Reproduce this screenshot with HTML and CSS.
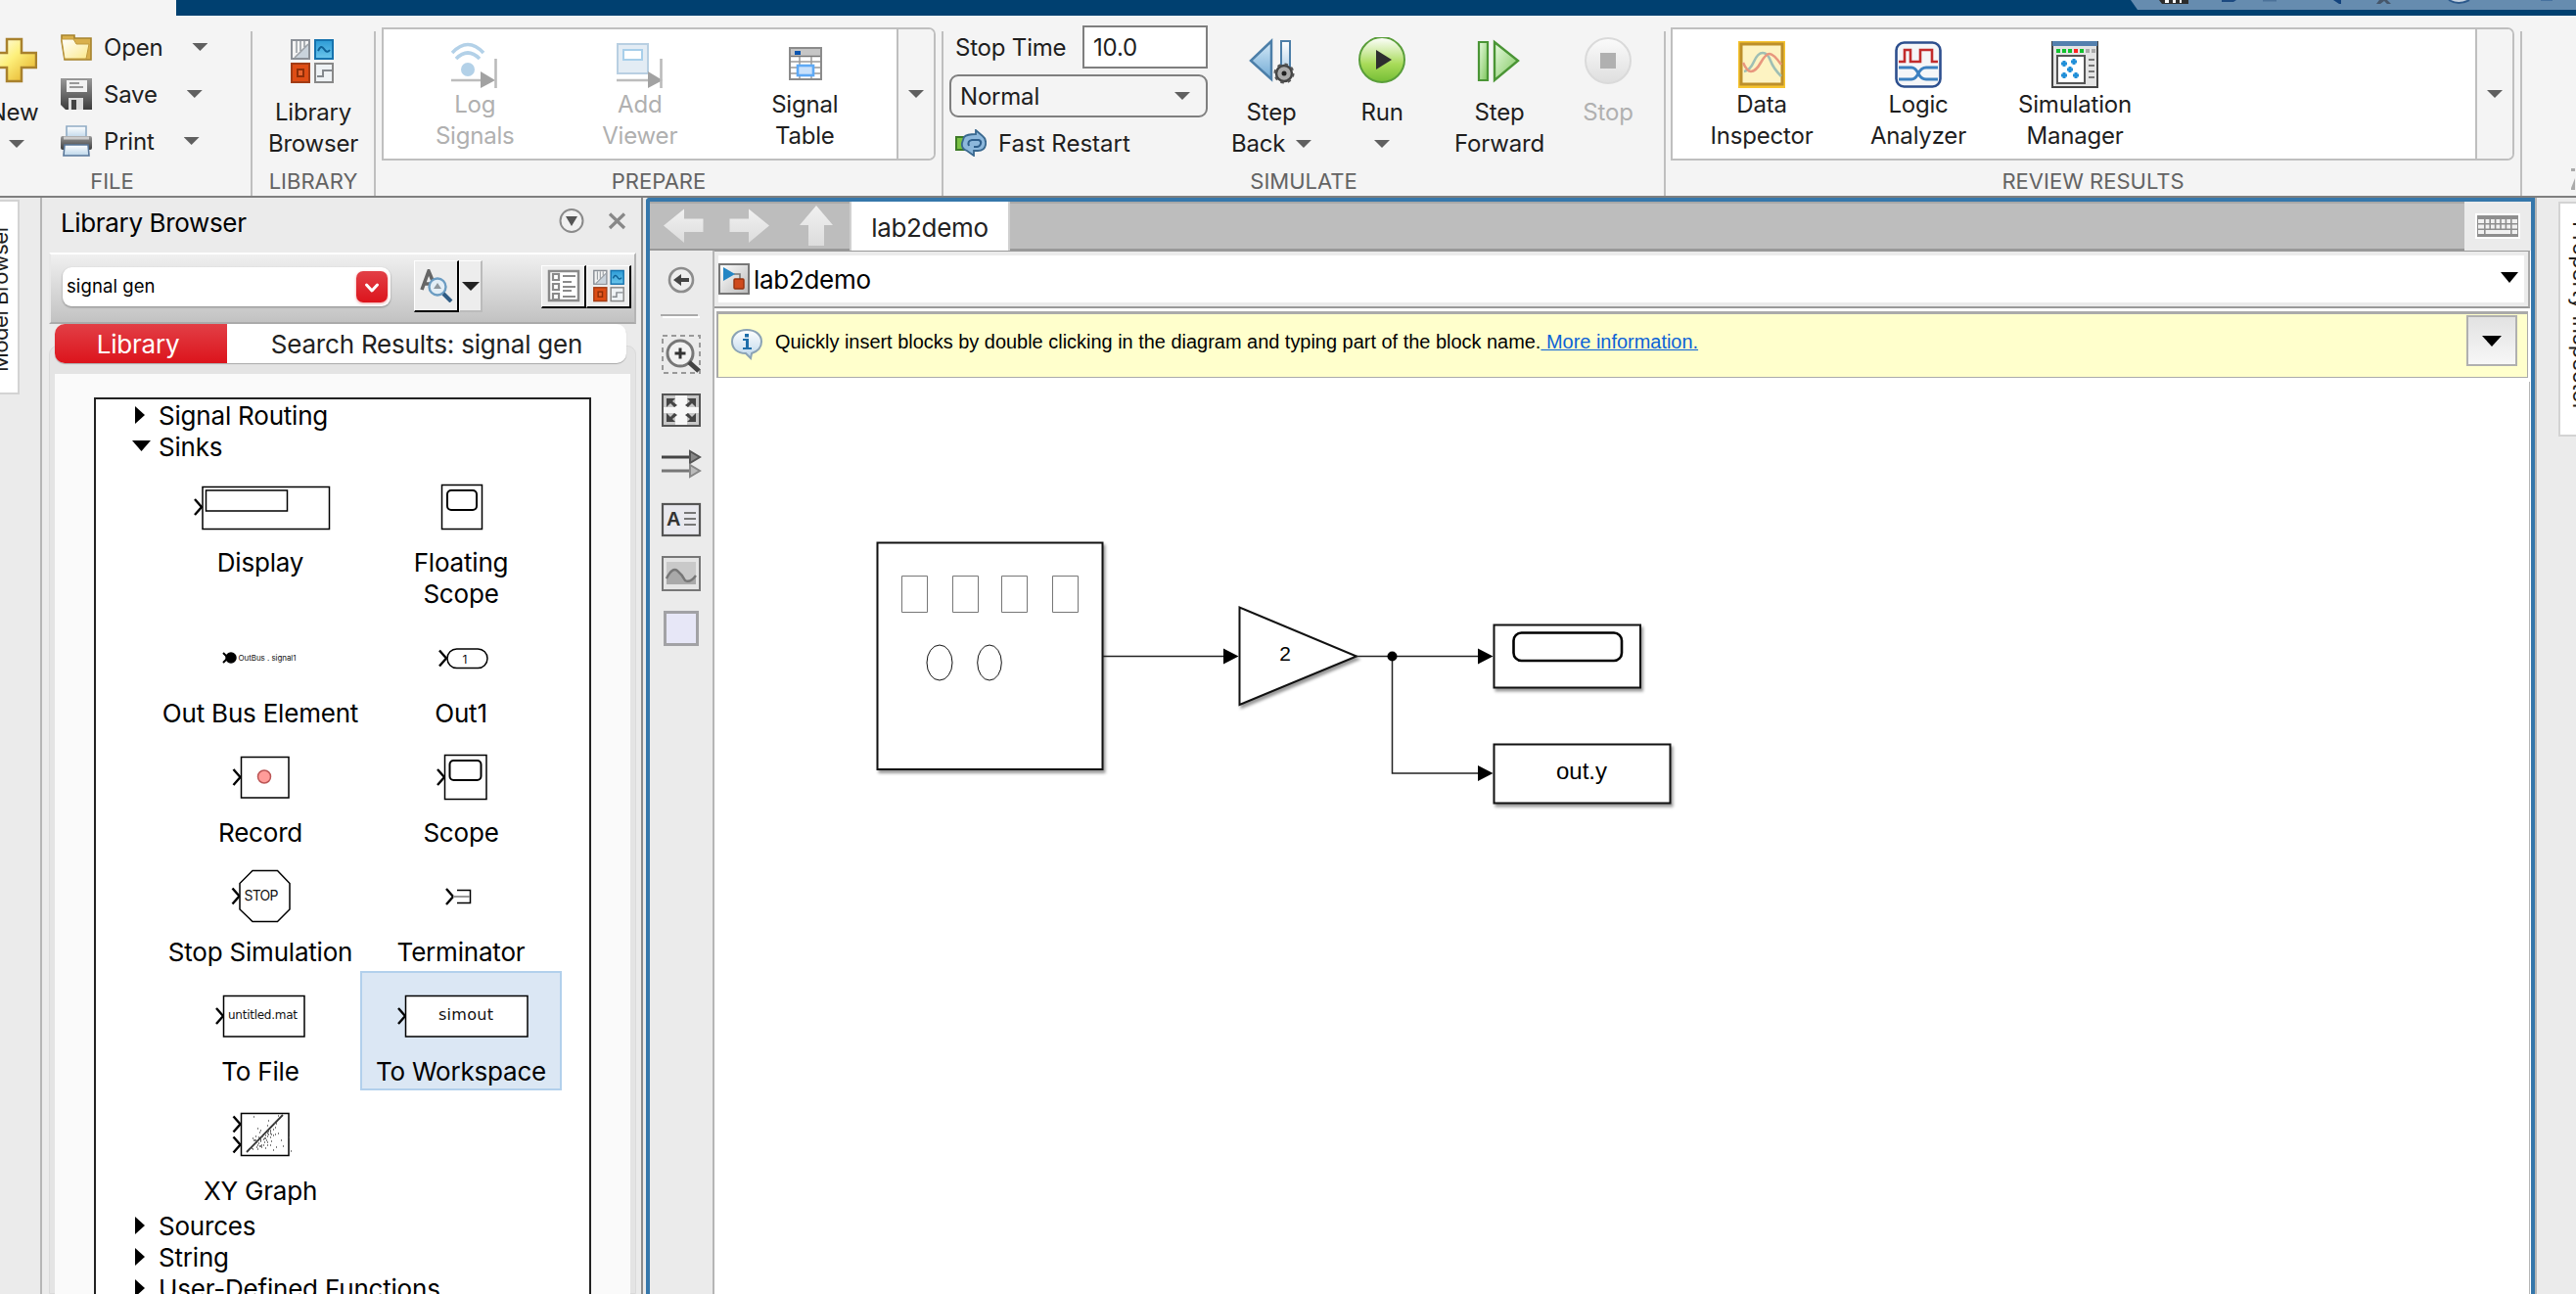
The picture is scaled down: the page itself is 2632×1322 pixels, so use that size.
FILE: index.html
```html
<!DOCTYPE html>
<html lang="en">
<head>
<meta charset="utf-8">
<title>lab2demo - Simulink</title>
<link rel="stylesheet" href="styles.css">
</head>
<body>
<svg class="defs" width="0" height="0">
  <defs>
    <linearGradient id="gold" x1="0" y1="0" x2="1" y2="1"><stop offset="0" stop-color="#fff"/><stop offset=".45" stop-color="#fdf07c"/><stop offset="1" stop-color="#e2a81c"/></linearGradient>
    <linearGradient id="folder" x1="0" y1="0" x2="1" y2="1"><stop offset="0" stop-color="#fff"/><stop offset="1" stop-color="#fbe98a"/></linearGradient>
    <linearGradient id="steel" x1="0" y1="0" x2="0" y2="1"><stop offset="0" stop-color="#999"/><stop offset="1" stop-color="#3c3c3c"/></linearGradient>
    <linearGradient id="pale" x1="0" y1="0" x2="0" y2="1"><stop offset="0" stop-color="#fff"/><stop offset="1" stop-color="#bcd6ea"/></linearGradient>
    <linearGradient id="silver" x1="0" y1="0" x2="1" y2="1"><stop offset="0" stop-color="#fff"/><stop offset="1" stop-color="#bbb"/></linearGradient>
    <linearGradient id="green" x1="0" y1="0" x2="0" y2="1"><stop offset="0" stop-color="#fff"/><stop offset=".35" stop-color="#cdeaa0"/><stop offset=".6" stop-color="#a8db58"/><stop offset="1" stop-color="#74bd35"/></linearGradient>
    <linearGradient id="mint" x1="0" y1="0" x2="1" y2="1"><stop offset="0" stop-color="#e8fbe0"/><stop offset="1" stop-color="#7dc65c"/></linearGradient>
    <linearGradient id="blue" x1="0" y1="0" x2="0" y2="1"><stop offset="0" stop-color="#d6eaf8"/><stop offset="1" stop-color="#6fa9d4"/></linearGradient>
    <linearGradient id="sky" x1="0" y1="0" x2="0" y2="1"><stop offset="0" stop-color="#2c9bd6"/><stop offset="1" stop-color="#6cc6ec"/></linearGradient>
    <linearGradient id="fade" x1="0" y1="0" x2="0" y2="1"><stop offset="0" stop-color="#fbfbfb"/><stop offset="1" stop-color="#dedede"/></linearGradient>
    <linearGradient id="arrow" x1="0" y1="0" x2="0" y2="1"><stop offset="0" stop-color="#f1f1f1"/><stop offset="1" stop-color="#dcdcdc"/></linearGradient>
    <g id="port"><path d="M-7-8 0 0-7 8" fill="none" stroke="#000" stroke-width="2.4"/></g>
    <g id="blocks">
      <rect x="1" y="1" width="18" height="19" fill="#f4f4f4" stroke="#8a8f96" stroke-width="2"/><path d="M5 19 18 5v14z" fill="#c9d3dc"/><path d="M6 2v12M10 2v10M14 2v6M4 19 18 5" fill="none" stroke="#9aa0a6" stroke-width="1.600"/>
      <rect x="25" y="1" width="18" height="19" fill="url(#sky)" stroke="#1673ae" stroke-width="2"/><path d="M28 12q3-7 6-2t6 1" fill="none" stroke="#0f6297" stroke-width="2"/>
      <rect x="1" y="25" width="18" height="19" fill="#de4d15" stroke="#a23c15" stroke-width="2"/><rect x="7" y="31" width="6" height="7" fill="#e8622c" stroke="#8e2e08" stroke-width="2"/>
      <rect x="25" y="25" width="18" height="19" fill="#eef2f5" stroke="#888" stroke-width="2"/><path d="M27 38h6v-6h9" fill="none" stroke="#84898e" stroke-width="2"/>
    </g>
  </defs>
</svg>

<header class="titlebar">
  <div class="active-tab"></div>
  <svg class="quick-access" width="458" height="16" viewBox="2174 0 458 16">
    <path d="M2177 0h455v10h-448z" fill="#668caf"/>
    <path d="M2206 0h30v4h-27z" fill="#2d2d2d"/><path d="M2212 0h4v3h-4zM2220 0h3v3h-3zM2227 0h2v3h-2z" fill="#fff"/>
    <path d="M2270 0h15l-3 2h-12z" fill="#1c4980"/><path d="M2312 0h14v1.500h-14z" fill="#4c7299"/>
    <path d="M2384 0h8v4h-2z" fill="#13437d"/><path d="M2428 4l3-4h8l4 4h-4l-3-3-4 3z" fill="#46566a"/>
    <path d="M2502 0q10 6 21 0" fill="#c8d4e2" stroke="#2d5a8c" stroke-width="2"/><path d="M2596 0h12v.8h-12z" fill="#3f6c9b"/>
  </svg>
</header>

<div class="toolstrip">
  <section class="section file">
    <div class="body">
      <button class="tall new"><svg class="ico" width="48" height="48" viewBox="0 0 48 48"><path d="M17 2h15v14h15v15H32v14H17V31H2V16h15z" fill="url(#gold)" stroke="#a8812d" stroke-width="2.500"/></svg><span>New</span><i class="caret"></i></button>
      <div class="file-list">
        <button class="row"><svg width="32" height="32" viewBox="0 0 32 32"><path d="M1 4h13v3h17v22H4L1 10z" fill="#d9b04c" stroke="#a5822d" stroke-width="1.600"/><path d="M1 8h12l3 5h13l-3 15H4z" fill="url(#folder)" stroke="#c09a3d" stroke-width="1"/></svg><span>Open</span><i class="caret"></i></button>
        <button class="row"><svg width="32" height="32" viewBox="0 0 32 32"><path d="M0 0h32v32H5l-5-5z" fill="url(#steel)"/><path d="M6 2h21v12H6z" fill="#f2f2f2"/><path d="M9 5h10M9 9h14" stroke="#999" stroke-width="2"/><path d="M8 20h15v12H8z" fill="#ddd"/><path d="M11 22h5v10h-5z" fill="#444"/></svg><span>Save</span><i class="caret"></i></button>
        <button class="row"><svg width="32" height="32" viewBox="0 0 32 32"><path d="M6 1h20v12H6z" fill="url(#pale)" stroke="#8fabc4" stroke-width="1.600"/><rect y="11" width="32" height="14" rx="2" fill="url(#steel)"/><path d="M3 13h26" stroke="#ccc" stroke-width="3"/><path d="M4 20h24l1 11H3z" fill="url(#pale)" stroke="#58779a" stroke-width="1.600"/></svg><span>Print</span><i class="caret"></i></button>
      </div>
    </div>
    <h2>FILE</h2>
  </section>
  <div class="divider"></div>
  <section class="section library">
    <div class="body"><button class="tall"><svg class="ico" width="48" height="48" viewBox="-1 -2 48 48"><use href="#blocks"/></svg><span>Library<br>Browser</span></button></div>
    <h2>LIBRARY</h2>
  </section>
  <div class="divider"></div>
  <section class="section prepare">
    <div class="gallery">
      <button class="item off"><svg width="48" height="48" viewBox="0 0 48 48"><path d="M1 12Q17-5 33 12M5 18q12-12 24 0" fill="none" stroke="#b3d1e8" stroke-width="3.600"/><circle cx="17" cy="29" r="7" fill="#b3d1e8"/><path d="M0 40h32" stroke="#bdbdbd" stroke-width="2.600"/><path d="M30 31v17l15-8z" fill="#a2a2a2"/><path d="M45.500 18v30" stroke="#bbb" stroke-width="2.600"/></svg><span>Log<br>Signals</span></button>
      <button class="item off"><svg width="48" height="48" viewBox="0 0 48 48"><rect x="1" y="3" width="31" height="30" fill="#e3ecf4" stroke="#b8cfe2" stroke-width="2"/><rect x="7" y="9" width="19" height="10" fill="#fff" stroke="#a8cfea" stroke-width="2"/><path d="M0 40h32" stroke="#bdbdbd" stroke-width="2.600"/><path d="M32 31v17l15-8z" fill="#a2a2a2"/><path d="M45.500 18v30" stroke="#bbb" stroke-width="2.600"/></svg><span>Add<br>Viewer</span></button>
      <button class="item"><svg width="48" height="48" viewBox="0 0 48 48"><rect x="9" y="7" width="32" height="32" fill="#fff" stroke="#8b8b8b" stroke-width="2"/><path d="M10 8h30v7H10z" fill="#c6c6c6"/><path d="M10 15.500h30" stroke="#777" stroke-width="1.600"/><path d="M10 21h30M10 27h30M10 33h30M19 16v22M31 16v22" stroke="#999" stroke-width="1.500"/><path d="M14 10h6v4h-6z" fill="#0a55b0"/><rect x="17" y="25" width="16" height="10" fill="#c9e1fb" stroke="#5ea9f5" stroke-width="2.600"/></svg><span>Signal<br>Table</span></button>
      <button class="more"><i class="caret"></i></button>
    </div>
    <h2>PREPARE</h2>
  </section>
  <div class="divider"></div>
  <section class="section simulate">
    <div class="body">
      <div class="sim-form">
        <label class="stop-time"><span>Stop Time</span><span class="field">10.0</span></label>
        <div class="select"><span>Normal</span><i class="caret"></i></div>
        <div class="restart"><svg width="32" height="28" viewBox="0 0 32 28"><path d="M1 8h11v13H1z" fill="#7ac143" stroke="#3d7a27" stroke-width="2"/><path d="M9 8q3-3 12-3V1l7 6q4 3 3 9t-8 6h-4v5l-7-5q-6-2-5-8z" fill="#8db8dc" stroke="#39688f" stroke-width="1.800"/><path d="M14 17q-2-5 3-6h7q3 1 2 4t-4 3h-3" fill="none" stroke="#2f5f8c" stroke-width="2"/></svg><span>Fast Restart</span></div>
      </div>
      <button class="tall back"><svg class="ico" width="48" height="48" viewBox="0 0 48 48"><path d="M24 4v39L3 24z" fill="url(#blue)" stroke="#4c7ea8" stroke-width="2.500"/><path d="M34 4h9v27h-9z" fill="url(#pale)" stroke="#4c7ea8" stroke-width="2"/><circle cx="37" cy="37" r="8" fill="#aaa" stroke="#444" stroke-width="2.500"/><circle cx="37" cy="37" r="9.500" fill="none" stroke="#555" stroke-width="2" stroke-dasharray="3.500 4"/><circle cx="37" cy="37" r="2.500" fill="#222"/></svg><span>Step<br>Back <i class="caret"></i></span></button>
      <button class="tall run"><svg class="ico" width="48" height="48" viewBox="0 0 48 48"><circle cx="24" cy="23" r="23" fill="url(#green)" stroke="#5a9e3a" stroke-width="2"/><path d="M18 13v20l16-10z" fill="#2e2e2e"/></svg><span>Run</span><i class="caret"></i></button>
      <button class="tall forward"><svg class="ico" width="48" height="48" viewBox="0 0 48 48"><path d="M3 5h9v39H3z" fill="url(#mint)" stroke="#4a9535" stroke-width="2.200"/><path d="M19 5v39l24-20z" fill="url(#mint)" stroke="#4a9535" stroke-width="2.400"/></svg><span>Step<br>Forward</span></button>
      <button class="tall stop off"><svg class="ico" width="48" height="48" viewBox="0 0 48 48"><circle cx="24" cy="24" r="23" fill="url(#fade)" stroke="#dadada" stroke-width="2"/><path d="M16 16h16v16H16z" fill="#b0b0b0"/></svg><span>Stop</span></button>
    </div>
    <h2>SIMULATE</h2>
  </section>
  <div class="divider"></div>
  <section class="section review">
    <div class="gallery">
      <button class="item"><svg width="48" height="48" viewBox="0 0 48 48"><path d="M0 0h48v48H0z" fill="#f6c430"/><rect x="3" y="3" width="42" height="41" fill="#fdf3c2" stroke="#bd8f2b" stroke-width="3"/><path d="M6 31q6-1 10-10t9-9 8 8 11 16" fill="none" stroke="#9fbfb4" stroke-width="2.600"/><path d="M5 22q4 9 8 9 5 0 10-9t9-9 12 11" fill="none" stroke="#e8977e" stroke-width="2.600"/></svg><span>Data<br>Inspector</span></button>
      <button class="item"><svg width="48" height="48" viewBox="0 0 48 48"><rect x="1.500" y="1.500" width="45" height="45" rx="8" fill="#f5f6f8" stroke="#2d4f8e" stroke-width="2.600"/><path d="M4 21h6V9h6v12h10V9h12v12h6" fill="none" stroke="#c22c2c" stroke-width="2.600"/><path d="M4 27h13q4 0 7 6t8 6h12M4 39h13q4 0 7-6t8-6h12" fill="none" stroke="#3c80c0" stroke-width="2.800"/></svg><span>Logic<br>Analyzer</span></button>
      <button class="item"><svg width="48" height="48" viewBox="0 0 48 48"><rect x="1" y="1" width="46" height="46" fill="#e4e4e4" stroke="#444" stroke-width="2"/><path d="M1 0h46v5H1z" fill="#5480ae"/><path d="M5 10h24" stroke="#12c12e" stroke-width="4" stroke-dasharray="4 2"/><path d="M23 10h4" stroke="#f22" stroke-width="4"/><path d="M29 10h4" stroke="#12c12e" stroke-width="4"/><path d="M35 10h10" stroke="#aaa" stroke-width="4" stroke-dasharray="4 2"/><rect x="6" y="15" width="28" height="28" fill="#fff" stroke="#555" stroke-width="2"/><path d="M13 20v6M10 23h6M23 18v6M20 21h6M19 26v6M16 29h6M13 32v6M10 35h6M25 32v6M22 35h6" stroke="#208fd8" stroke-width="3"/><path d="M41 18v22" stroke="#777" stroke-width="6" stroke-dasharray="2 4"/></svg><span>Simulation<br>Manager</span></button>
      <button class="more"><i class="caret"></i></button>
    </div>
    <h2>REVIEW RESULTS</h2>
  </section>
  <div class="divider"></div>
  <svg class="collapse" width="54" height="184" viewBox="2578 16 54 184"><path d="M2628 172h4v3h-4zM2628 192l4-10v12h-4z" fill="#aaa"/></svg>
</div>

<main class="workspace">
  <aside class="edge left">
    <svg width="18" height="195" viewBox="0 206 18 195"><text class="side-text" transform="translate(8 380) rotate(-90)" textLength="151">Model Browser</text></svg>
  </aside>

  <section class="browser">
    <div class="panel-title"><span>Library Browser</span>
      <svg width="70" height="28" viewBox="570 212 70 28"><circle cx="584" cy="225.500" r="11.500" fill="#f0f0f0" stroke="#8a8a8a" stroke-width="2"/><path d="M578 221h12l-6 10z" fill="#555"/><path d="M623 218.500l15 14.500M638 218.500 623 233" stroke="#888" stroke-width="3.200"/></svg>
    </div>
    <div class="toolbar">
      <div class="search"><span>signal gen</span><b><svg width="32" height="32" viewBox="0 0 32 32"><path d="M10.500 14l5.500 6 5.500-6" fill="none" stroke="#fff" stroke-width="3" stroke-linecap="round" stroke-linejoin="round"/></svg></b></div>
      <div class="bevel find"><svg width="34" height="34" viewBox="0 0 34 34"><path d="M2 21 9 2l5 12M4 15h6" fill="none" stroke="#666" stroke-width="3.600"/><circle cx="18" cy="18" r="8.500" fill="#e3eef6" stroke="#6b9cc2" stroke-width="2.400"/><path d="M14 20l4-6 4 6z" fill="#8f979d"/><path d="M24 25l8 8" stroke="#2f5c85" stroke-width="4"/></svg></div>
      <div class="bevel soft"><svg width="18" height="9" viewBox="0 0 18 9"><path d="M0 0h18L9 9z" fill="#222"/></svg></div>
      <div class="bevel list"><svg width="34" height="34" viewBox="0 0 34 34"><path d="M2 2h30v30H2z" fill="#fff" stroke="#8a8a8a" stroke-width="2.500"/><path d="M6 5h6v6H6zM6 15h6v6H6zM6 25h6v6H6zM16 7h13M16 13h9M16 18h13M16 22h9M16 28h13" fill="none" stroke="#8a8a8a" stroke-width="2.200"/></svg></div>
      <div class="bevel"><svg width="34" height="34" viewBox="-1 -1 46 47"><use href="#blocks"/></svg></div>
    </div>
    <div class="group">
      <div class="tabs"><div class="tab on">Library</div><div class="tab">Search Results: signal gen</div></div>
      <div class="pane">
        <div class="tree">
          <div class="node"><svg width="20" height="20"><path d="M3 1v18l10-9z"/></svg><span>Signal Routing</span></div>
          <div class="node open"><svg width="20" height="20"><path d="M0 4h19l-9.500 11z"/></svg><span>Sinks</span></div>
          <div class="cells">
            <figure class="first"><svg width="204" height="86" viewBox="164 472 204 86"><use href="#port" x="206" y="518"/><path d="M207 497.500h129.500v43H207zM210.500 501h83v21h-83z"/></svg><figcaption>Display</figcaption></figure>
            <figure class="first"><svg width="206" height="86" viewBox="368 472 206 86"><path d="M451.500 495.500h41v45h-41z"/><rect x="457" y="501" width="30" height="20" rx="4" stroke-width="2"/></svg><figcaption>Floating<br>Scope</figcaption></figure>
            <figure><svg width="204" height="86" viewBox="164 626 204 86"><path d="M228 667l5 5-5 5" stroke-width="2"/><circle cx="236" cy="672" r="5" fill="#000"/><text class="tiny" x="243.500" y="675" textLength="59">OutBus . signal1</text></svg><figcaption>Out Bus Element</figcaption></figure>
            <figure><svg width="206" height="86" viewBox="368 626 206 86"><use href="#port" x="456" y="672.500"/><rect x="457" y="663" width="41" height="19.500" rx="9.700"/><text class="one" x="475" y="677.500">1</text></svg><figcaption>Out1</figcaption></figure>
            <figure><svg width="204" height="86" viewBox="164 748 204 86"><use href="#port" x="245.500" y="794"/><path d="M246.500 773.500h48.500v41.500h-48.500z"/><circle cx="270" cy="793.500" r="6.500" fill="#ff9c99" stroke="#b55"/></svg><figcaption>Record</figcaption></figure>
            <figure><svg width="206" height="86" viewBox="368 748 206 86"><use href="#port" x="454" y="794"/><path d="M454.500 771.500h42.500v45h-42.500z"/><rect x="459.500" y="777" width="32" height="20" rx="4" stroke-width="2"/></svg><figcaption>Scope</figcaption></figure>
            <figure><svg width="204" height="86" viewBox="164 870 204 86"><use href="#port" x="244.500" y="915.500"/><path d="M258 889.500h25.500L296 902.500v26.500l-12.500 12.500H258l-13-12.500v-26.500z"/><text class="stopword" x="249.500" y="920" textLength="35">STOP</text></svg><figcaption>Stop Simulation</figcaption></figure>
            <figure><svg width="206" height="86" viewBox="368 870 206 86"><use href="#port" x="463" y="916"/><path d="M467 909.500h13.500v13H467"/><path d="M463 916h17" stroke="#999" stroke-width="2"/></svg><figcaption>Terminator</figcaption></figure>
            <figure><svg width="204" height="86" viewBox="164 992 204 86"><use href="#port" x="228" y="1038"/><path d="M228.500 1017.500h82.500v41.500h-82.500z"/><text class="mat" x="233" y="1040.500" textLength="71">untitled.mat</text></svg><figcaption>To File</figcaption></figure>
            <figure class="selected"><svg width="206" height="86" viewBox="368 992 206 86"><use href="#port" x="414" y="1038"/><path d="M414.500 1017.500h124.500v41.500h-124.500z"/><text class="simout" x="448" y="1042" textLength="56">simout</text></svg><figcaption>To Workspace</figcaption></figure>
            <figure><svg width="204" height="86" viewBox="164 1114 204 86"><use href="#port" x="245.500" y="1148.500"/><use href="#port" x="245.500" y="1169.500"/><path d="M246.500 1137.500h48.500v43h-48.500z"/><path d="M252 1177l37-38" stroke="#333" stroke-width="1.800"/><path d="M258 1163h1m3 4h1m-6 6h1m3-12h1m4 4h1m-5 7h1m3-17h1m4 5h1m-3 4h1m4-8h1m-5 11h1m5-5h1m-4 8h1m2-15h1m4 4h1m-9 2h1m-8 10h1m-3-3h1m16-16h1m2 6h1m-5-10h1m-7-3h1m-9 19h1m6-6h1m-9 13h1m10-1h1m-6 3h1m10-1h1m-4 3h1m9-4h1m5-9h1m-9 3h1m-25-12h1m33 23h1M259 1141h1m24-1h1m-3 8h1m-4 6h1m-4 4h1m-10 12h1m-8-5h1m-3 9h1m8-13h1m2 2h1m5-7h1m-3 3h1m-2-9h1m-9 7h1m-7 8h1M261 1165h1m2-3h1m3-1h1m-6 9h1m2-4h1m4-3h1m-3 7h1m3-14h1m3 3h1m-6 6h1m4 1h1m1-6h1m-17 14h1m3-2h1m5-5h1" stroke="#555" stroke-width="1.600"/></svg><figcaption>XY Graph</figcaption></figure>
          </div>
          <div class="node"><svg width="20" height="20"><path d="M3 1v18l10-9z"/></svg><span>Sources</span></div>
          <div class="node"><svg width="20" height="20"><path d="M3 1v18l10-9z"/></svg><span>String</span></div>
          <div class="node"><svg width="20" height="20"><path d="M3 1v18l10-9z"/></svg><span>User-Defined Functions</span></div>
        </div>
      </div>
    </div>
  </section>

  <section class="editor">
    <div class="doc-tabs">
      <svg width="202" height="50" viewBox="664 206 202 50" fill="url(#arrow)"><path d="M678 230.500l21-17v10h19.500v13.500H699v11z"/><path d="M786 230.500l-21-17v10h-19.500v13.500H765v11z"/><path d="M834 210l17 20h-9v21h-16v-21h-9z"/></svg>
      <div class="doc-tab">lab2demo</div>
      <div class="keys"><svg width="46" height="26" viewBox="0 0 46 26"><path d="M0 0h46v26H0z" fill="#fff"/><path d="M2 2h42v22H2z" fill="#8e8e8e"/><path d="M3 8h40M3 13.500h40M3 19h40" stroke="#f1f1f1" stroke-width="4" stroke-dasharray="6 1.600 3.800 1.600 3.800 1.600 3.800 1.600 3.800 1.600 3.800 1.600 6 0"/><path d="M12 19h23" stroke="#f1f1f1" stroke-width="4"/></svg></div>
    </div>
    <div class="split">
      <nav class="palette">
        <svg width="64" height="500" viewBox="664 256 64 500">
          <circle cx="696" cy="286" r="12" fill="#eee" stroke="#8d8d8d" stroke-width="2.600"/><path d="M688 286l8-6v4h8v4h-8v4z" fill="#444"/>
          <path d="M675 322h38" stroke="#aaa" stroke-width="2"/><path d="M677 324h38" stroke="#fff" stroke-width="2"/>
          <path d="M677 343h38v38h-38z" fill="none" stroke="#999" stroke-width="2" stroke-dasharray="5 4"/><circle cx="695" cy="361" r="13" fill="#f2f2f2" stroke="#777" stroke-width="3"/><path d="M695 355.500v11M689.500 361h11" stroke="#333" stroke-width="3"/><path d="M704 370l10 9" stroke="#444" stroke-width="5"/>
          <rect x="677" y="403" width="38" height="32" fill="#c8c8c8" stroke="#555" stroke-width="2"/><path d="M690 404h12v30h-12zM678 416h36v6h-36z" fill="#f7f7f7"/><path d="M681 407h9l-3 3 5 4-3 2-4-4-4 4zM711 407h-9l3 3-5 4 3 2 4-4 4 4zM681 431h9l-3-3 5-4-3-2-4 4-4-4zM711 431h-9l3-3-5-4 3-2 4 4 4-4z" fill="#444"/>
          <path d="M676 467h30" stroke="#444" stroke-width="3"/><path d="M705 461v12l10-6z" fill="#888" stroke="#555" stroke-width="2"/><path d="M676 481h30" stroke="#777" stroke-width="3"/><path d="M705 475v12l10-6z" fill="#bbb" stroke="#888" stroke-width="2"/>
          <rect x="677" y="515" width="38" height="32" fill="#e8e8ee" stroke="#555" stroke-width="2.200"/><text class="glyph" x="681" y="537">A</text><path d="M699 524h12M699 530h12M699 536h12" stroke="#777" stroke-width="2"/>
          <rect x="677" y="569" width="38" height="34" fill="#e5e5e5" stroke="#777" stroke-width="2"/><path d="M681 574h30v23h-30z" fill="#c9c9c9"/><path d="M681 597v-6q6-12 11-8t8 10q5 3 11-5v9z" fill="#a9a9a9"/><path d="M681 591q6-12 11-8t8 10q5 3 11-5" fill="none" stroke="#777" stroke-width="2.400"/>
          <rect x="679.500" y="625.500" width="33" height="33" fill="#e7e7f7" stroke="#a2a2a5" stroke-width="3"/>
        </svg>
      </nav>
      <div class="content">
        <div class="address"><svg width="32" height="32" viewBox="0 0 32 32"><rect x="1" y="1" width="30" height="30" fill="url(#silver)" stroke="#777" stroke-width="2"/><path d="M16 11h6v6" fill="none" stroke="#777" stroke-width="1.600"/><path d="M5 4v14l12-7z" fill="#2385c4"/><rect x="16" y="16" width="10" height="10" rx="1" fill="#cf4a1c" stroke="#96320e" stroke-width="1.400"/></svg><span>lab2demo</span><svg class="drop" width="18" height="11"><path d="M0 0h18L9 11z"/></svg></div>
        <div class="notice">
          <svg width="32" height="32" viewBox="0 0 32 32"><path d="M16 1c9 0 15 5 15 12 0 6-4 10-10 12l-1 5-5-5C6 25 1 20 1 13 1 6 7 1 16 1z" fill="url(#pale)" stroke="#8ba3b5" stroke-width="2"/><path d="M12 10h6v9h3v2h-9v-2h3v-7h-3zM14 5h4v3.500h-4z" fill="#1f6ea9"/></svg>
          <p>Quickly insert blocks by double clicking in the diagram and typing part of the block name.<a> More information.</a></p>
          <div class="dismiss"><svg width="20" height="11"><path d="M0 0h20L10 11z"/></svg></div>
        </div>
        <div class="canvas">
          <svg width="1856" height="932" viewBox="730 390 1856 932">
            <g class="shape">
              <path d="M896.500 554.500h230v231.500h-230z"/>
              <path d="M1266.500 620.500v99.500L1386 670.500z"/>
              <path d="M1526.500 638.500h149.500v64h-149.500zM1526.500 760.500h180v60h-180z"/>
            </g>
            <g class="thin">
              <path d="M921.500 588.500h26v37h-26zM973.500 588.500h26v37h-26zM1023.500 588.500h26v37h-26zM1075.500 588.500h26v37h-26z"/>
            </g>
            <g class="round"><ellipse cx="960" cy="677" rx="13" ry="18"/><ellipse cx="1011" cy="677" rx="12.300" ry="18"/></g>
            <rect class="screen" x="1546.500" y="646.500" width="110.500" height="28.500" rx="8"/>
            <path class="wire" d="M1127 670.500h124M1386 670.500h125M1422.500 670.500v119.500h88"/>
            <circle cx="1422.500" cy="670.500" r="5"/>
            <path d="M1250 662.500v16l15.500-8zM1510 662.500v16l15.500-8zM1510 782v16l15.500-8z"/>
            <text x="1313" y="675" class="gain">2</text><text x="1616" y="796" class="outy">out.y</text>
          </svg>
        </div>
      </div>
    </div>
  </section>

  <aside class="edge right">
    <svg width="16" height="236" viewBox="2616 208 16 236"><text class="side-text" transform="translate(2629 226) rotate(90)" textLength="194">Property Inspector</text></svg>
  </aside>
</main>
</body>
</html>
```
FILE: styles.css
```css
* { box-sizing: border-box; }
body { margin: 0; width: 2632px; height: 1322px; overflow: hidden; display: flex; flex-direction: column; background: #ebebeb; font: 24px/32px Inter, "Liberation Sans", sans-serif; letter-spacing: -.2px; color: #1e1e1e; }
button { font: inherit; letter-spacing: inherit; color: inherit; border: 0; padding: 0; margin: 0; background: none; }
svg { display: block; flex: none; }
.defs { position: absolute; }

.titlebar { height: 16px; flex: none; background: #004070; display: flex; justify-content: space-between; }
.active-tab { width: 180px; background: #f4f4f4; }

.toolstrip { height: 186px; flex: none; display: flex; background: #f4f4f4; border-bottom: 2px solid #7f7f7f; overflow: hidden; }
.divider { width: 2px; height: 168px; flex: none; margin-top: 16px; background: #bfbfbf; }
.section { flex: none; display: flex; flex-direction: column; justify-content: space-between; }
.section h2 { margin: 0 0 1px; font-size: 22px; line-height: 27px; font-weight: 400; letter-spacing: 0; color: #636363; text-align: center; }
.body { display: flex; height: 156px; }
.caret { display: block; width: 16px; height: 8px; background: #5f5f5f; clip-path: polygon(0 0, 100% 0, 50% 100%); }
.tall { display: flex; flex-direction: column; align-items: center; padding-top: 22px; text-align: center; flex: none; }
.tall .ico { margin-bottom: 13px; }
.tall > .caret { margin-top: 12px; }
.tall span .caret { display: inline-block; vertical-align: 4px; margin-left: 4px; }
.off { color: #b0b0b0; }

.file { width: 282px; margin-left: -26px; }
.file h2 { padding-right: 1px; }
.new { width: 80px; }
.new .caret { margin-left: 6px; }
.file-list { padding: 8px 0 0 8px; }
.row { display: flex; align-items: center; width: 160px; height: 48px; }
.row span { margin-left: 12px; margin-right: 30px; padding-top: 2px; }
.library { width: 124px; }
.library .body { justify-content: center; }
.library .tall { width: 120px; }

.gallery { display: flex; height: 136px; margin-top: 12px; background: #fff; border: 2px solid #bfbfbf; border-radius: 0 7px 7px 0; overflow: hidden; }
.item { display: flex; flex-direction: column; align-items: center; padding-top: 12px; flex: none; }
.item svg { margin-bottom: 1px; }
.more { margin-left: auto; width: 38px; background: #f4f4f4; border-left: 2px solid #bfbfbf; display: flex; align-items: center; justify-content: center; }
.prepare { width: 578px; }
.prepare .gallery { width: 566px; margin-left: 6px; padding-left: 9px; }
.prepare .item { width: 168.500px; }

.simulate { width: 736px; }
.sim-form { width: 264px; margin: 10px 6px 0; display: flex; flex-direction: column; gap: 6px; flex: none; }
.sim-form > * { display: flex; align-items: center; height: 44px; }
.sim-form span { padding-top: 1px; }
.stop-time { padding-left: 6px; justify-content: space-between; }
.sim-form .field { width: 128px; height: 44px; border: 2px solid #7f7f7f; background: #fff; padding: 5px 9px; }
.select { border: 2px solid #7f7f7f; border-radius: 9px; padding: 0 16px 0 9px; justify-content: space-between; }
.restart { padding-left: 6px; gap: 12px; margin-top: -2px; letter-spacing: 0; }
.back { width: 120px; margin-left: -1px; }
.run { width: 106px; }
.forward { width: 134px; }
.stop { width: 88px; }

.review { width: 873px; }
.review .gallery { width: 862px; margin-left: 5px; padding-left: 11px; }
.review .item { width: 160px; }

.workspace { flex: 1; display: flex; min-height: 0; }
.edge { flex: none; }
.edge > svg { background: #fff; border: 2px solid #d3d3d3; box-sizing: content-box; }
.side-text { font-size: 22px; fill: #1e1e1e; letter-spacing: 0; }
.left { width: 43px; border-right: 2px solid #b5b5b5; padding-top: 2px; }
.left > svg { border-left: 0; }
.right { flex: 1; border-left: 2px solid #b5b5b5; padding: 4px 0 0 22px; }
.right > svg { border-right: 0; }

.browser { width: 614px; flex: none; border-right: 2px solid #8c8c8c; padding: 0 6px 0 7px; display: flex; flex-direction: column; color: #000; }
.panel-title { height: 56px; display: flex; justify-content: space-between; padding: 10px 9px 0 12px; font-size: 26px; letter-spacing: -.35px; flex: none; }
.toolbar { flex: none; height: 73px; width: 600px; display: flex; align-items: center; background: linear-gradient(#f0f0f0, #c2c2c2); border: 2px solid #b5b5b5; border-color: #fff #b5b5b5 #aaa #e8e8e8; padding: 0 3px 4px 12px; }
.search { width: 335px; height: 40px; background: #fff; border-radius: 9px; box-shadow: 0 1px 2px #888; display: flex; align-items: center; justify-content: space-between; padding: 0 3px 0 4px; font-size: 18.500px; letter-spacing: .1px; }
.search b { background: linear-gradient(#e23f46, #dc141c); border-radius: 7px; box-shadow: 0 1px 3px #e99; }
.search span { margin-top: -2px; }
.bevel { width: 46px; height: 44px; flex: none; display: grid; place-items: center; background: #ededed; border: 1px solid #000; border-color: #fff #000 #000 #fff; border-width: 1px 2px 2px 1px; }
.bevel.find { height: 53px; margin-left: 24px; }
.bevel.soft { width: 24px; height: 53px; border-color: #fff #bbb #bbb #fff; }
.bevel.list { margin-left: auto; }
.group { flex: 1; width: 600px; margin-top: 22px; background: #e4e4e4; border: 1px solid #dadada; border-radius: 9px 9px 0 0; padding: 0 5px; min-height: 0; }
.tabs { display: flex; height: 40px; width: 584px; margin-top: -23px; border-radius: 10px; background: #fff; box-shadow: 0 1px 1px #aaa; overflow: hidden; font-size: 26px; line-height: 41px; color: #222; }
.tab { flex: 1; text-align: center; }
.tab.on { flex: none; width: 176px; padding-right: 6px; background: linear-gradient(#e23f46, #dc141c); color: #fff; }
.pane { background: #fafafa; height: 960px; margin-top: 11px; padding: 24px 40px 0; }
.tree { background: #fff; border: 2px solid #222; height: 960px; font-size: 26px; }
.node { display: flex; align-items: center; height: 32px; padding-left: 37px; gap: 7px; }
.node span, figcaption { position: relative; top: 1px; }
.cells { display: grid; grid-template-columns: 204px 206px; padding-left: 66px; }
figure { margin: 0; height: 122px; text-align: center; }
figure.first { height: 154px; }
figure.selected { background: #dbe7f4; box-shadow: inset 0 0 0 2px #b2d0ec; }
figure svg { fill: #fff; stroke: #000; stroke-width: 1.500px; }
figure text { fill: #111; stroke: none; letter-spacing: 0; }
.tiny { font-size: 8px; }
.one { font-size: 12px; text-anchor: middle; }
.stopword { font-size: 14px; }
.mat { font: 12px "DejaVu Sans", sans-serif; }
.simout { font: 16px "DejaVu Sans", sans-serif; }

.editor { width: 1930px; flex: none; margin-left: 3px; border: 4px solid #3577ab; border-bottom: 0; border-radius: 4px 0 0 0; display: flex; flex-direction: column; background: #fff; }
.doc-tabs { height: 50px; flex: none; display: flex; background: #bdbdbd; box-shadow: inset 0 2px #a8a8a8, inset 0 -2px #999; }
.doc-tab { width: 164px; margin-left: 2px; border: 2px solid #d0d0d0; border-width: 0 2px; background: #fff; text-align: center; font-size: 26px; line-height: 54px; letter-spacing: -.3px; color: #222; }
.keys { margin-left: auto; width: 68px; background: #ebebeb; display: grid; place-items: center; }
.split { flex: 1; display: flex; min-height: 0; }
.palette { width: 66px; flex: none; background: #ebebeb; border-right: 2px solid #b5b5b5; }
.glyph { font: bold 20px "Liberation Sans", sans-serif; fill: #333; }
.content { flex: 1; display: flex; flex-direction: column; min-width: 0; }
.address { height: 59px; flex: none; margin-right: 1px; border: 1px solid #999; border-width: 1px 2px 2px 0; border-color: #999 #aaa; background: #fff; box-shadow: inset 0 0 0 4px #ebebeb; display: flex; align-items: center; padding: 0 10px 0 4px; font-size: 26px; letter-spacing: -.3px; color: #000; }
.address span { margin-left: 4px; padding-top: 2px; }
.drop { margin-left: auto; margin-top: -4px; }
.notice { height: 68px; flex: none; margin: 3px 3px 0 2px; background: #ffffcc; border: 2px solid #aaa; border-width: 3px 1px 1px 2px; display: flex; padding: 0 10px 0 13px; }
.notice > svg { margin-top: 15px; }
.notice p { margin: 9px 0 0 13px; font: 19.950px/38px "Liberation Sans", Arial, sans-serif; letter-spacing: 0; color: #000; white-space: pre; }
.notice a { color: #0b62d6; text-decoration: underline; }
.dismiss { margin: 1px 0 0 auto; width: 52px; height: 52px; border: 2px solid #b0b0b0; background: linear-gradient(#e2e2e2, #f7f7f7); display: grid; place-items: center; }
.canvas { flex: 1; border-right: 1px solid #b5b5b5; margin: 4px 1px 0 0; min-height: 0; overflow: hidden; }
.shape { fill: #fff; stroke: #111; stroke-width: 2px; filter: drop-shadow(2px 3px 1.500px rgba(0, 0, 0, .4)); }
.thin { fill: #fff; stroke: #777; }
.round { fill: #fff; stroke: #111; }
.screen { fill: #fff; stroke: #000; stroke-width: 2.600px; }
.wire { fill: none; stroke: #222; stroke-width: 1.500px; }
.gain, .outy { font: 21px "Liberation Sans", Arial, sans-serif; letter-spacing: 0; text-anchor: middle; }
.outy { font-size: 24px; }
```
